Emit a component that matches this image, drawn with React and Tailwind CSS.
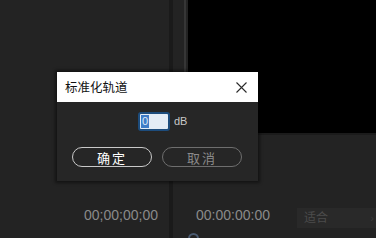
import React from "react";

const App = () => {
  return (
    <div className="relative w-[376px] h-[238px] overflow-hidden bg-[#232323] font-['Liberation_Sans','Noto_Sans_CJK_SC',sans-serif]">
      <div className="flex h-full">
        {/* source panel */}
        <div className="w-[169px] flex flex-col">
          <div className="flex-1" />
          <div className="h-[33px] flex items-start justify-end pr-[11px]">
            <span className="text-[14px] leading-[20px] text-[#8a8a8a]">00;00;00;00</span>
          </div>
        </div>

        <div className="w-[4px] bg-[#1a1a1a]" />

        {/* program panel */}
        <div className="flex-1 flex flex-col">
          <div className="h-[133px] flex">
            <div className="w-[11px]" />
            <div className="w-[2px] bg-[#363636]" />
            <div className="w-[2px]" />
            <div className="flex-1 bg-black" />
          </div>
          <div className="h-[2px] bg-[#1b1b1b]" />
          <div className="flex-1" />
          <div className="h-[33px] relative flex items-start">
            <span className="ml-[23px] text-[14px] leading-[20px] text-[#8a8a8a]">00:00:00:00</span>
            <div className="ml-auto w-[79px] h-[20px] mt-[3px] bg-[#292929] flex items-center pl-[7px]">
              <span className="text-[12px] text-[#4c4c4c]">适合</span>
              <span className="ml-auto mr-[2px] text-[11px] text-[#3c3c3c]">›</span>
            </div>
            <div className="absolute left-[15px] top-[28px] w-[11px] h-[11px] rounded-full border-2 border-[#4a5a70]" />
          </div>
        </div>
      </div>

      {/* dialog */}
      <div className="absolute left-[57px] top-[72px] w-[201px] h-[109px] bg-[#262626] shadow-[0_0_3px_2px_rgba(0,0,0,0.45)] flex flex-col">
        <div className="h-[30px] bg-white flex items-center pl-[8px] pr-[11px]">
          <span className="text-[12.5px] text-[#111] font-['Noto_Sans_CJK_SC',sans-serif]">标准化轨道</span>
          <svg className="ml-auto" width="11" height="11" viewBox="0 0 11 11" fill="none" stroke="#2a2a2a" strokeWidth="1.1">
            <path d="M0.5 0.5L10.5 10.5M10.5 0.5L0.5 10.5" />
          </svg>
        </div>
        <div className="flex items-center pl-[81px] mt-[10px]">
          <div className="w-[32px] h-[19px] rounded-[3px] border-2 border-[#1d4c7c] bg-[#e4ecf5] flex items-center pl-[1px]">
            <span className="h-[13px] w-[8px] bg-[#3f7cc7] text-[11px] leading-[13px] text-[#dfe9f5] flex items-center justify-center">0</span>
          </div>
          <span className="ml-[4px] text-[11px] text-[#c8c8c8]">dB</span>
        </div>
        <div className="flex gap-[10px] pl-[15px] mt-[16px]">
          <button className="w-[80px] h-[20px] rounded-full border-[1.5px] border-[#c9c9c9] text-[13px] leading-none text-white tracking-[2px] font-['Noto_Sans_CJK_SC',sans-serif] flex items-center justify-center">
            确定
          </button>
          <button className="w-[80px] h-[20px] rounded-full border-[1.5px] border-[#6e6e6e] text-[13px] leading-none text-[#8a8a8a] tracking-[2px] font-['Noto_Sans_CJK_SC',sans-serif] flex items-center justify-center">
            取消
          </button>
        </div>
      </div>
    </div>
  );
};

export default App;
